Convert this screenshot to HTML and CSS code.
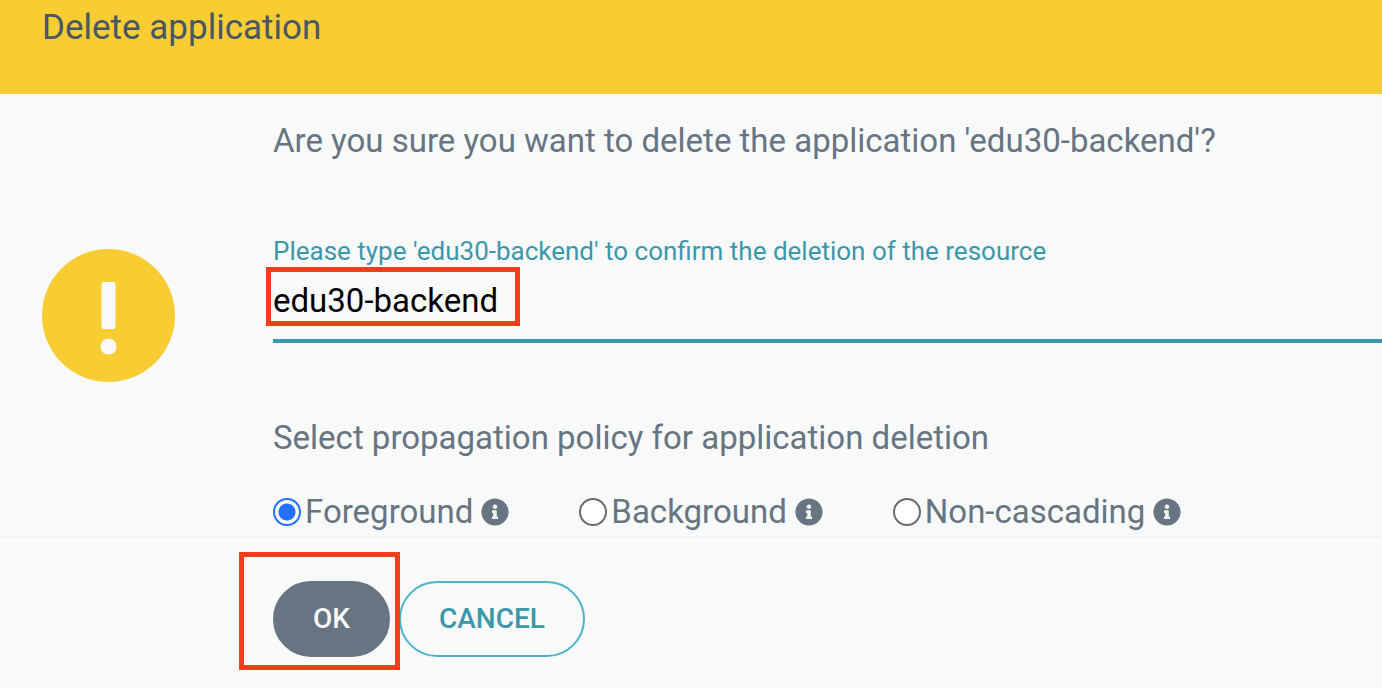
FILE: index.html
```
<!DOCTYPE html>
<html lang="en">
<head>
<meta charset="utf-8">
<title>Delete application</title>
<link rel="stylesheet" href="styles.css">
</head>
<body>
<svg class="defs" aria-hidden="true">
  <symbol id="info" viewBox="0 0 512 512">
    <path fill="currentColor" d="M256 8C119 8 8 119 8 256s111 248 248 248 248-111 248-248S393 8 256 8zm0 110c23 0 42 19 42 42s-19 42-42 42-42-19-42-42 19-42 42-42zm56 254c0 7-5 12-12 12h-88c-7 0-12-5-12-12v-24c0-7 5-12 12-12h12v-64h-12c-7 0-12-5-12-12v-24c0-7 5-12 12-12h64c7 0 12 5 12 12v100h12c7 0 12 5 12 12v24z"/>
  </symbol>
</svg>
<form class="dialog">
  <header class="dialog-header">
    <h1 class="dialog-title">Delete application</h1>
  </header>
  <main class="dialog-body">
    <svg class="alert-icon" viewBox="0 0 133 133" aria-hidden="true">
      <circle cx="66.5" cy="66.5" r="66.5" fill="#f8cc33"/>
      <rect x="59.5" y="33" width="14" height="47" rx="2" fill="#f8faf9"/>
      <circle cx="66.5" cy="97.5" r="8" fill="#f8faf9"/>
    </svg>
    <div class="fields">
      <p class="message">Are you sure you want to delete the application 'edu30-backend'?</p>
      <div class="confirm">
        <label class="confirm-label" for="name">Please type 'edu30-backend' to confirm the deletion of the resource</label>
        <input class="confirm-input" id="name" type="text" value="edu30-backend" autocomplete="off" spellcheck="false">
        <span class="mark mark-input"></span>
      </div>
      <p class="message" id="policy">Select propagation policy for application deletion</p>
      <div class="options" role="radiogroup" aria-labelledby="policy">
        <div class="option">
          <input class="radio" type="radio" name="policy" id="fg" checked>
          <label for="fg">Foreground</label>
          <svg class="info"><use href="#info"/></svg>
        </div>
        <div class="option">
          <input class="radio" type="radio" name="policy" id="bg">
          <label for="bg">Background</label>
          <svg class="info"><use href="#info"/></svg>
        </div>
        <div class="option">
          <input class="radio" type="radio" name="policy" id="nc">
          <label for="nc">Non-cascading</label>
          <svg class="info"><use href="#info"/></svg>
        </div>
      </div>
    </div>
  </main>
  <footer class="dialog-footer">
    <div class="ok-wrap">
      <button class="button button-ok" type="button">OK</button>
      <span class="mark mark-ok"></span>
    </div>
    <button class="button button-cancel" type="button">CANCEL</button>
  </footer>
</form>
</body>
</html>
```

FILE: styles.css
```
* {
  box-sizing: border-box;
}

body {
  margin: 0;
  background: #f8faf9;
  color: #677482;
  font-family: Roboto, "Liberation Sans", sans-serif;
  font-size: 33px;
  line-height: 40px;
  overflow-x: hidden;
}

.defs {
  display: none;
}

.dialog-header {
  padding: 8px 42px 46px;
  background: #f8cc33;
}

.dialog-title {
  margin: 0;
  color: #495763;
  font-size: 35px;
  font-weight: 400;
  line-height: 40px;
}

.dialog-body {
  display: flex;
  align-items: center;
  gap: 98px;
  padding-left: 42px;
  border-bottom: 1px solid #f1f3f3;
}

.alert-icon {
  flex: none;
  width: 133px;
  height: 133px;
}

.fields {
  flex: 1;
  min-width: 0;
  padding: 27px 0 4px;
}

.message {
  margin: 0;
  white-space: nowrap;
}

.confirm {
  position: relative;
  display: flex;
  flex-direction: column;
  margin: 74px 0 75px;
}

.confirm-label {
  color: #3c97ab;
  font-size: 26px;
  line-height: 32px;
  white-space: nowrap;
}

.confirm-input {
  width: 100%;
  height: 76px;
  padding: 0 0 6px;
  border: 0;
  border-bottom: 4px solid #3c97ab;
  border-radius: 0;
  outline: 0;
  background: transparent;
  color: #000;
  font: inherit;
}

.mark {
  position: absolute;
  border: 5px solid #ee3e1c;
  pointer-events: none;
}

.mark-input {
  top: 32px;
  left: -7px;
  width: 254px;
  height: 59px;
}

.options {
  display: flex;
  gap: 70px;
  margin-top: 34px;
}

.option {
  display: flex;
  align-items: center;
  gap: 4px;
  white-space: nowrap;
}

.radio {
  appearance: none;
  flex: none;
  width: 28px;
  height: 28px;
  margin: 0;
  border: 2px solid #6b6b6b;
  border-radius: 50%;
  background: #fff;
}

.radio:checked {
  border-color: #2370fb;
  background: radial-gradient(circle, #2370fb 8px, #fff 9px);
}

.info {
  width: 28px;
  height: 28px;
  margin-left: 4px;
}

.dialog-footer {
  display: flex;
  gap: 9px;
  padding: 44px 0 31px 273px;
}

.ok-wrap {
  position: relative;
}

.button {
  display: block;
  height: 76px;
  padding: 0 38px;
  border: 2px solid #4bb3ca;
  border-radius: 38px;
  background: transparent;
  color: #3c97ab;
  font: 500 28px/32px Roboto, "Liberation Sans", sans-serif;
}

.button-ok {
  border-color: #677482;
  background: #677482;
  color: #f8faf9;
}

.mark-ok {
  top: -29px;
  left: -34px;
  width: 161px;
  height: 118px;
}
```
